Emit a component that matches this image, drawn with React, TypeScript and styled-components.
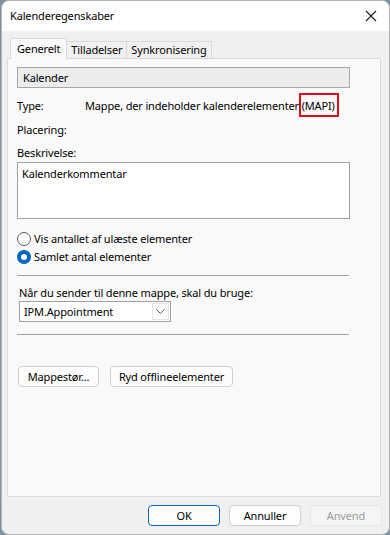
import React from "react";
import styled, { createGlobalStyle } from "styled-components";

const GlobalStyle = createGlobalStyle`
  html, body { margin: 0; padding: 0; }
  body {
    width: 390px;
    height: 535px;
    background: #7f93a6;
    font-family: "Noto Sans", "Open Sans", sans-serif;
    font-size: 11px;
    letter-spacing: -0.15px;
    color: #000;
    overflow: hidden;
  }
`;

const Window = styled.div`
  box-sizing: border-box;
  width: 389px;
  height: 535px;
  margin-left: 1px;
  background: #f0f0f0;
  border: 1px solid #b5b5b5;
  border-radius: 8px;
  overflow: hidden;
  display: flex;
  flex-direction: column;
`;

const TitleBar = styled.div`
  height: 30px;
  background: #ffffff;
  display: flex;
  align-items: center;
  justify-content: space-between;
  padding: 0 12px 0 8px;
  flex-shrink: 0;
`;

const Title = styled.span`
  line-height: 16px;
`;

const CloseIcon = () => (
  <svg width="12" height="12" viewBox="0 0 12 12">
    <path d="M1 1 L11 11 M11 1 L1 11" stroke="#1a1a1a" strokeWidth="1.1" fill="none" />
  </svg>
);

const Body = styled.div`
  flex: 1;
  display: flex;
  flex-direction: column;
  padding: 7px 7px 0 5px;
`;

const TabStrip = styled.div`
  display: flex;
  align-items: flex-end;
  height: 21px;
  padding-left: 3px;
  margin-bottom: -1px;
  position: relative;
  z-index: 1;
`;

const Tab = styled.div<{ $active?: boolean }>`
  box-sizing: border-box;
  height: ${(p) => (p.$active ? "21px" : "18px")};
  padding: ${(p) => (p.$active ? "0 6px" : "0 4px")};
  margin-left: ${(p) => (p.$active ? "0" : "-1px")};
  background: ${(p) => (p.$active ? "#f9f9f9" : "#f0f0f0")};
  border: 1px solid #d9d9d9;
  border-bottom: ${(p) => (p.$active ? "1px solid #f9f9f9" : "1px solid #d9d9d9")};
  display: flex;
  align-items: center;
  line-height: 16px;
  position: relative;
  z-index: ${(p) => (p.$active ? 2 : 1)};
  &:first-child { margin-left: 0; }
`;

const Panel = styled.div`
  box-sizing: border-box;
  width: 374px;
  height: 439px;
  background: #f9f9f9;
  border: 1px solid #dcdcdc;
  padding: 8px 9px 0 9px;
  display: flex;
  flex-direction: column;
`;

const NameField = styled.div`
  box-sizing: border-box;
  width: 333px;
  height: 21px;
  background: #ececec;
  border: 1px solid #a8a8a8;
  padding: 0 5px;
  display: flex;
  align-items: center;
  line-height: 16px;
`;

const InfoRow = styled.div<{ $top: number }>`
  display: flex;
  align-items: center;
  margin-top: ${(p) => p.$top}px;
  height: 16px;
  line-height: 16px;
`;

const Label = styled.span`
  width: 68px;
  flex-shrink: 0;
`;

const Highlight = styled.span`
  position: relative;
  &::after {
    content: "";
    position: absolute;
    left: -3px;
    right: -4px;
    top: -5px;
    bottom: -4px;
    border: 2px solid #e00a1b;
  }
`;

const TextArea = styled.div`
  box-sizing: border-box;
  width: 333px;
  height: 57px;
  margin-top: 1px;
  background: #ffffff;
  border: 1px solid #a0a0a0;
  padding: 3px 4px;
  line-height: 16px;
`;

const RadioGroup = styled.div`
  display: flex;
  flex-direction: column;
  gap: 3px;
  margin-top: 12px;
`;

const RadioRow = styled.label`
  display: flex;
  align-items: center;
  gap: 3px;
  height: 15px;
  line-height: 16px;
`;

const RadioDot = styled.span<{ $checked?: boolean }>`
  box-sizing: border-box;
  width: 14px;
  height: 14px;
  border-radius: 50%;
  flex-shrink: 0;
  background: ${(p) => (p.$checked ? "#0067c0" : "#ffffff")};
  border: ${(p) => (p.$checked ? "none" : "1px solid #5c5c5c")};
  display: flex;
  align-items: center;
  justify-content: center;
  &::after {
    content: "";
    display: ${(p) => (p.$checked ? "block" : "none")};
    width: 6px;
    height: 6px;
    border-radius: 50%;
    background: #ffffff;
  }
`;

const Separator = styled.div<{ $top: number }>`
  width: 332px;
  height: 1px;
  background: #a0a0a0;
  margin-top: ${(p) => p.$top}px;
`;

const SendLabel = styled.div`
  margin-top: 9px;
  padding-left: 2px;
  line-height: 16px;
`;

const Select = styled.div`
  box-sizing: border-box;
  width: 152px;
  height: 21px;
  margin-left: 2px;
  background: #ffffff;
  border: 1px solid #a0a0a0;
  display: flex;
  align-items: center;
  justify-content: space-between;
  padding-left: 4px;
  line-height: 16px;
`;

const SelectArrow = styled.span`
  box-sizing: border-box;
  width: 17px;
  height: 17px;
  margin-right: 1px;
  border: 1px solid #e3e3e3;
  display: flex;
  align-items: center;
  justify-content: center;
`;

const ActionRow = styled.div`
  display: flex;
  gap: 11px;
  margin-top: 31px;
  padding-left: 1px;
`;

const Button = styled.div<{ $width: number; $primary?: boolean; $disabled?: boolean }>`
  box-sizing: border-box;
  width: ${(p) => p.$width}px;
  height: 21px;
  border-radius: 4px;
  background: ${(p) => (p.$disabled ? "#f5f5f5" : "#fdfdfd")};
  border: 1px solid
    ${(p) => (p.$primary ? "#0067c0" : p.$disabled ? "#e5e5e5" : "#d0d0d0")};
  color: ${(p) => (p.$disabled ? "#9d9d9d" : "#000")};
  display: flex;
  align-items: center;
  justify-content: center;
  line-height: 16px;
`;

const Footer = styled.div`
  display: flex;
  justify-content: flex-end;
  gap: 9px;
  padding: 8px 0 0 0;
`;

export default function App() {
  return (
    <>
      <GlobalStyle />
      <Window>
        <TitleBar>
          <Title>Kalenderegenskaber</Title>
          <CloseIcon />
        </TitleBar>
        <Body>
          <TabStrip>
            <Tab $active>Generelt</Tab>
            <Tab>Tilladelser</Tab>
            <Tab>Synkronisering</Tab>
          </TabStrip>
          <Panel>
            <NameField>Kalender</NameField>
            <InfoRow $top={10}>
              <Label>Type:</Label>
              <span>
                Mappe, der indeholder kalenderelementer <Highlight>(MAPI)</Highlight>
              </span>
            </InfoRow>
            <InfoRow $top={8}>
              <Label>Placering:</Label>
            </InfoRow>
            <InfoRow $top={7}>
              <Label>Beskrivelse:</Label>
            </InfoRow>
            <TextArea>Kalenderkommentar</TextArea>
            <RadioGroup>
              <RadioRow>
                <RadioDot />
                Vis antallet af ulæste elementer
              </RadioRow>
              <RadioRow>
                <RadioDot $checked />
                Samlet antal elementer
              </RadioRow>
            </RadioGroup>
            <Separator $top={11} />
            <SendLabel>Når du sender til denne mappe, skal du bruge:</SendLabel>
            <Select>
              IPM.Appointment
              <SelectArrow>
                <svg width="9" height="5" viewBox="0 0 9 5">
                  <path d="M0.5 0.5 L4.5 4.5 L8.5 0.5" stroke="#555" strokeWidth="1" fill="none" />
                </svg>
              </SelectArrow>
            </Select>
            <Separator $top={12} />
            <ActionRow>
              <Button $width={81}>Mappestør...</Button>
              <Button $width={123}>Ryd offlineelementer</Button>
            </ActionRow>
          </Panel>
          <Footer>
            <Button $width={72} $primary>OK</Button>
            <Button $width={72}>Annuller</Button>
            <Button $width={72} $disabled>Anvend</Button>
          </Footer>
        </Body>
      </Window>
    </>
  );
}
